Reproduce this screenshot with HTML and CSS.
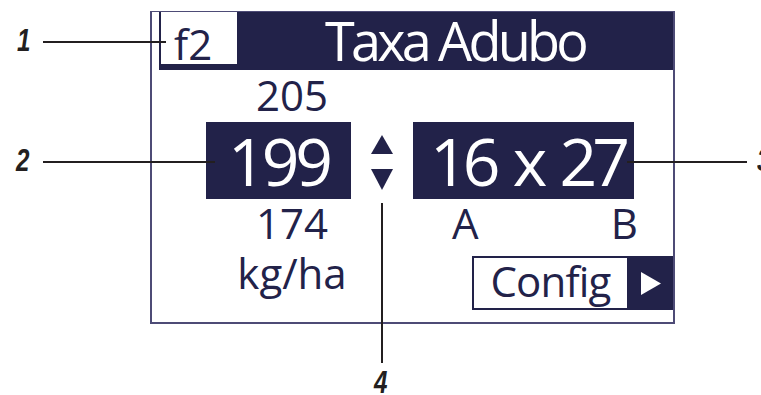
FILE: index.html
```html
<!DOCTYPE html>
<html lang="pt">
<head>
    <meta charset="UTF-8">
    <title>Taxa Adubo</title>
    <link rel="stylesheet" href="styles.css">
</head>
<body>
<div class="stage">
    <div class="panel">
        <div class="header">
            <div class="tag">f2</div>
            <div class="title">Taxa Adubo</div>
        </div>
        <div class="body">
            <div class="hint hint-max">205</div>
            <div class="value value-rate">199</div>
            <div class="arrows">
                <svg width="22" height="68" viewBox="0 0 22 68">
                    <polygon points="11,0 22,19 0,19"/>
                    <polygon points="0,34 22,34 11,55"/>
                </svg>
            </div>
            <div class="value value-size">16 x 27</div>
            <div class="hint hint-min">174</div>
            <div class="ab"><span>A</span><span>B</span></div>
            <div class="hint unit">kg/ha</div>
            <div class="config">
                <span class="config-label">Config</span>
                <span class="config-go">
                    <svg width="20" height="23" viewBox="0 0 20 23"><polygon points="0,0 20,11.5 0,23"/></svg>
                </span>
            </div>
        </div>
    </div>

    <!-- chamadas -->
    <div class="line line-1"></div>
    <div class="line line-2"></div>
    <div class="line line-3"></div>
    <div class="line line-4"></div>
    <span class="num num-1">1</span>
    <span class="num num-2">2</span>
    <span class="num num-3">3</span>
    <span class="num num-4">4</span>
</div>
</body>
</html>
```

FILE: styles.css
```css
* {
    padding: 0;
    margin: 0;
    box-sizing: border-box;
}

body {
    background: #fff;
    font-family: "Open Sans", "Noto Sans", sans-serif;
    color: #222249;
}

.stage {
    width: 761px;
    height: 395px;
    position: relative;
    overflow: hidden;
    padding: 11px 0 0 150px;
}

.panel {
    width: 525px;
    height: 313px;
    border: 2px solid #4d4b76;
    border-top-width: 1px;
}

.header {
    display: flex;
    height: 58px;
    margin-left: 7px;
    padding: 0 0 6px 2px;
    background: #222249;
}

.tag {
    width: 76px;
    height: 52px;
    padding: 11px 0 0 13px;
    background: #fff;
    font-size: 42px;
    line-height: 42px;
}

.title {
    flex: 1;
    padding: 3px 0 0 0;
    text-align: center;
    color: #fff;
    font-size: 54px;
    line-height: 50px;
    letter-spacing: -3.8px;
}

.body {
    display: grid;
    grid-template-columns: 54px 145px 20px 22px 20px 221px 39px;
    grid-template-rows: 52px 77px 48px 75px;
}

.hint {
    grid-column: 2;
    padding-left: 27px;
    text-align: center;
    font-size: 42px;
    line-height: 44px;
}

.hint-max {
    grid-row: 1;
    padding-top: 3px;
}

.hint-min {
    grid-row: 3;
    padding-top: 2px;
}

.unit {
    grid-row: 4;
    padding-top: 4px;
}

.value {
    grid-row: 2;
    background: #222249;
    color: #fff;
    text-align: center;
    font-size: 66px;
    line-height: 77px;
    letter-spacing: -4px;
}

.value-rate {
    grid-column: 2;
}

.value-size {
    grid-column: 6;
    padding-left: 8px;
    letter-spacing: -5px;
    word-spacing: 5px;
}

.arrows {
    grid-column: 4;
    grid-row: 2;
    padding-top: 13px;
}

.arrows svg {
    display: block;
    fill: #222249;
}

.ab {
    grid-column: 6;
    grid-row: 3;
    display: flex;
    justify-content: space-between;
    padding: 2px 0 0 39px;
    margin-right: -4px;
    font-size: 42px;
    line-height: 44px;
}

.config {
    grid-column: 6 / 8;
    grid-row: 4;
    justify-self: end;
    display: flex;
    width: 201px;
    height: 54px;
    margin-top: 9px;
    border: 2px solid #222249;
}

.config-label {
    flex: 1;
    text-align: center;
    font-size: 42px;
    line-height: 46px;
    letter-spacing: -0.8px;
}

.config-go {
    width: 44px;
    display: flex;
    align-items: center;
    justify-content: center;
    padding-left: 4px;
    background: #222249;
}

.config-go svg {
    display: block;
    fill: #fff;
}

.line {
    position: absolute;
    height: 2px;
    background: #231f20;
}

.line-1 { left: 43px; top: 41px; width: 123px; }
.line-2 { left: 43px; top: 161px; width: 172px; }
.line-3 { left: 627px; top: 161px; width: 120px; }
.line-4 { left: 381px; top: 203px; width: 2px; height: 160px; }

.num {
    position: absolute;
    font-family: "Liberation Sans", Arial, sans-serif;
    font-weight: bold;
    font-style: italic;
    font-size: 31px;
    line-height: 26px;
    color: #231f20;
    transform: scaleX(0.78);
    transform-origin: left top;
}

.num-1 { left: 17px; top: 28px; }
.num-2 { left: 16px; top: 148px; }
.num-3 { left: 757px; top: 148px; }
.num-4 { left: 374px; top: 370px; }
```
